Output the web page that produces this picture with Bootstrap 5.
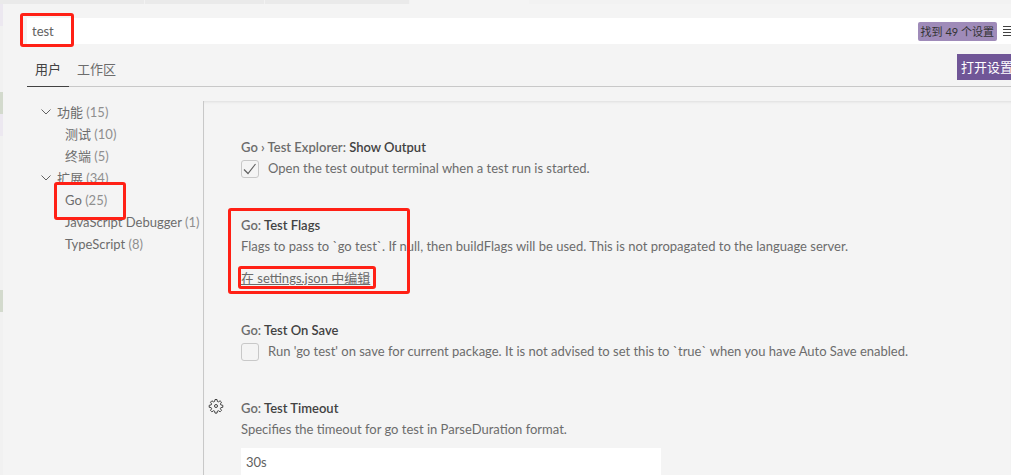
<!DOCTYPE html>
<html lang="zh-CN">
<head>
<meta charset="utf-8">
<meta name="viewport" content="width=device-width, initial-scale=1">
<title>设置</title>
<link href="https://cdn.jsdelivr.net/npm/bootstrap@5.3.0/dist/css/bootstrap.min.css" rel="stylesheet">
<style>
  body { font-family: Lato, "Noto Sans CJK SC", sans-serif; font-size: 13px; line-height: 18px; color: #6c6c6c; background: #f4f4f4; }
  .gutter { width: 3px; background: #f1f1f1; }
  .gutter-a { height: 22px; background: #ece8f0; }
  .gutter-b { height: 22px; background: #d3dacd; }
  .gutter-far { margin-top: 154px; }
  .gutter-near { margin-top: 66px; }
  .tabstrip { height: 4px; margin-left: -3px; gap: 1px; background: #f2f2f2; }
  .tabstrip div { width: 119px; background: #eaeaea; }
  .tabstrip .tab-wide { width: 144px; }
  .tabstrip .tab-active { background: #f4f4f4; }
  .searchbar { height: 26px; margin: 14px 0 0 24px; background: #fff; }
  .searchbar .form-control { height: 26px; padding: 0 5px; font-size: 13px; color: #616161; }
  .form-control, .btn { border-radius: 0; }
  .found { height: 19px; line-height: 19px; padding: 0 3px; font-size: 11px; border-radius: 2px; background: #9f8bb9; color: #333; }
  .menu-btn { width: 8px; height: 16px; margin-left: 6px; }
  .scopes { margin-left: 24px; padding-top: 10px; border-bottom: 1px solid #c8c8c8; }
  .scopes .nav-link { height: 33px; padding: 6px 8px 0; color: #6c6c6c; border-bottom: 1px solid transparent; margin-bottom: -1px; }
  .scopes .nav-link.active { color: #424242; border-color: #424242; }
  .sync-btn { width: 54px; height: 26px; padding: 0 0 0 4px; font-size: 13px; line-height: 26px; background: #705697; color: #fff; }
  .panes { margin-top: 14px; }
  .toc { width: 200px; }
  .toc li { height: 22px; line-height: 22px; padding-left: 38px; white-space: nowrap; }
  .toc .child { padding-left: 62px; }
  .toc svg { width: 10px; height: 6px; margin-right: 6px; fill: none; stroke: #616161; }
  .toc a, .edit-link { color: #6c6c6c; }
  .toc span { color: #8f8f8f; }
  .settings { border-left: 1px solid #c8c8c8; padding: 37px 20px 0 37px; box-shadow: inset 0 3px 3px -2px #ddd; }
  .setting { margin-bottom: 39px; }
  .setting-list { margin-bottom: 34px; }
  .setting h2 { font-size: 13px; line-height: 18px; font-weight: 600; margin-bottom: 3px; }
  .setting h2 b { font-weight: 600; color: #424242; }
  .setting .form-check-input { width: 18px; height: 18px; margin: 1px 9px -1px 0; border: 1px solid #c8c8c8; border-radius: 3px; background-color: transparent; }
  .setting .form-check-input:checked { background-size: 18px; background-image: url("data:image/svg+xml,%3Csvg xmlns='http://www.w3.org/2000/svg' viewBox='0 0 18 18'%3E%3Cpath d='M3 9.500l4 4L14.500 4' fill='none' stroke='%23616161' stroke-width='1.200'/%3E%3C/svg%3E"); }
  .setting .form-control { width: 420px; height: 28px; padding: 0 5px; margin-top: 10px; font-size: 13px; color: #616161; }
  .edit-wrap { height: 18px; margin-top: 14px; width: fit-content; }
  .gear { left: -33px; top: -1px; width: 16px; height: 16px; }
  .callout { border: 3px solid #ff2015; border-radius: 3px; pointer-events: none; }
  .callout-search { left: -7px; top: -5px; width: 54px; height: 34px; }
  .callout-go { left: 51px; top: -7px; width: 72px; height: 38px; }
  .callout-flags { left: -13px; top: -8px; width: 182px; height: 86px; }
  .callout-edit { left: -3px; top: -3px; right: -6px; height: 23px; }
</style>
</head>
<body>
<div class="d-flex min-vh-100 overflow-hidden">
  <div class="gutter flex-shrink-0 d-flex flex-column" aria-hidden="true">
    <div class="gutter-a mt-1"></div>
    <div class="gutter-b gutter-near"></div>
    <div class="gutter-a"></div>
    <div class="gutter-b gutter-far"></div>
  </div>
  <div class="flex-grow-1 d-flex flex-column">
    <div class="tabstrip d-flex" aria-hidden="true">
      <div class="tab-wide"></div><div></div><div class="tab-wide"></div><div class="tab-active"></div>
    </div>
    <div class="searchbar position-relative d-flex align-items-center">
      <input class="form-control border-0 bg-transparent shadow-none flex-grow-1" type="text" value="test" aria-label="搜索设置">
      <span class="found flex-shrink-0 text-nowrap">找到 49 个设置</span>
      <button class="menu-btn btn p-0 border-0 d-flex flex-shrink-0 overflow-hidden" aria-label="筛选">
        <svg class="flex-shrink-0" width="16" height="16" viewBox="0 0 16 16" stroke="#424242" shape-rendering="crispEdges"><path d="M0 3.500h14M0 6.500h14M0 9.500h14M0 12.500h14"/></svg>
      </button>
      <div class="callout callout-search position-absolute"></div>
    </div>
    <div class="scopes d-flex">
      <nav class="nav flex-grow-1">
        <a class="nav-link active" href="#user">用户</a>
        <a class="nav-link" href="#workspace">工作区</a>
      </nav>
      <button class="sync-btn btn border-0 overflow-hidden text-nowrap text-start">打开设置</button>
    </div>
    <div class="panes d-flex flex-grow-1">
      <ul class="toc list-unstyled flex-shrink-0 mb-0">
        <li class="d-flex align-items-center"><svg viewBox="0 0 10 6"><path d="M.5.5L5 5 9.500.5"/></svg><a class="text-decoration-none" href="#features">功能 <span>(15)</span></a></li>
        <li class="child"><a class="text-decoration-none" href="#testing">测试 <span>(10)</span></a></li>
        <li class="child"><a class="text-decoration-none" href="#terminal">终端 <span>(5)</span></a></li>
        <li class="d-flex align-items-center"><svg viewBox="0 0 10 6"><path d="M.5.5L5 5 9.500.5"/></svg><a class="text-decoration-none" href="#extensions">扩展 <span>(34)</span></a></li>
        <li class="child position-relative"><a class="text-decoration-none" href="#go">Go <span>(25)</span></a><div class="callout callout-go position-absolute"></div></li>
        <li class="child"><a class="text-decoration-none" href="#js">JavaScript Debugger <span>(1)</span></a></li>
        <li class="child"><a class="text-decoration-none" href="#ts">TypeScript <span>(8)</span></a></li>
      </ul>
      <main class="settings flex-grow-1">
        <section class="setting">
          <h2>Go › Test Explorer: <b>Show Output</b></h2>
          <div class="d-flex"><input class="form-check-input flex-shrink-0" type="checkbox" id="showOutput" checked><label for="showOutput">Open the test output terminal when a test run is started.</label></div>
        </section>
        <section class="setting setting-list position-relative">
          <h2>Go: <b>Test Flags</b></h2>
          <div>Flags to pass to `go test`. If null, then buildFlags will be used. This is not propagated to the language server.</div>
          <div class="edit-wrap position-relative"><a class="edit-link" href="#json">在 settings.json 中编辑</a><div class="callout callout-edit position-absolute"></div></div>
          <div class="callout callout-flags position-absolute"></div>
        </section>
        <section class="setting">
          <h2>Go: <b>Test On Save</b></h2>
          <div class="d-flex"><input class="form-check-input flex-shrink-0" type="checkbox" id="onSave"><label for="onSave">Run 'go test' on save for current package. It is not advised to set this to `true` when you have Auto Save enabled.</label></div>
        </section>
        <section class="setting position-relative mb-0">
          <button class="gear btn p-0 border-0 position-absolute d-flex" aria-label="更多操作"><svg width="16" height="16" viewBox="0 0 16 16" fill="none" stroke="#424242"><circle cx="8" cy="8" r="1.500"/><path d="M7 1.500h2l.4 2 1 .4 1.700-1.100 1.400 1.400-1.100 1.700.4 1 2 .4v2l-2 .4-.4 1 1.100 1.700-1.400 1.400-1.700-1.100-1 .4-.4 2H7l-.4-2-1-.4-1.700 1.100-1.400-1.400 1.100-1.700-.4-1-2-.4v-2l2-.4.4-1-1.100-1.700 1.400-1.400 1.700 1.100 1-.4z"/></svg></button>
          <h2>Go: <b>Test Timeout</b></h2>
          <label class="d-block" for="timeout">Specifies the timeout for go test in ParseDuration format.</label>
          <input class="form-control border-0" type="text" id="timeout" value="30s">
        </section>
      </main>
    </div>
  </div>
</div>
<script src="https://cdn.jsdelivr.net/npm/bootstrap@5.3.0/dist/js/bootstrap.bundle.min.js"></script>
</body>
</html>
